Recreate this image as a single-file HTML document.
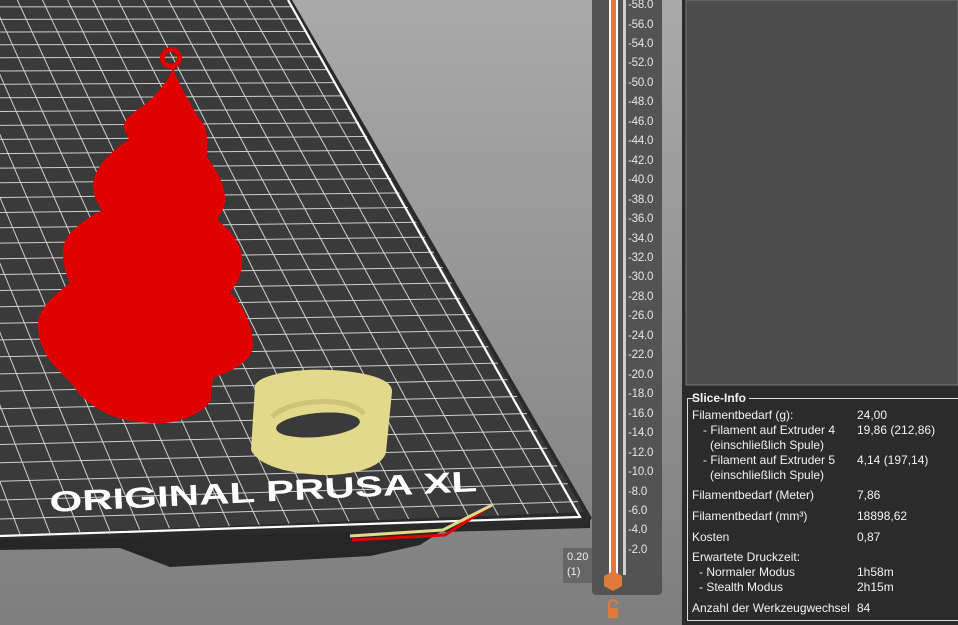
<!DOCTYPE html>
<html><head><meta charset="utf-8"><style>
html,body{margin:0;padding:0;width:958px;height:625px;overflow:hidden;background:#8f8f8f;font-family:"Liberation Sans",sans-serif}
.abs{position:absolute}
.lbl{position:absolute;left:628px;font-size:11.5px;color:#e6e6e6;letter-spacing:-0.2px}
.si{position:absolute;font-size:12px;color:#f2f2f2;white-space:nowrap}
</style></head><body>
<svg class="abs" style="left:0;top:0" width="958" height="625">
<defs>
<linearGradient id="bg" x1="0" y1="0" x2="0" y2="1"><stop offset="0" stop-color="#a9a9a9"/><stop offset="1" stop-color="#7e7e7e"/></linearGradient>
<clipPath id="bed"><polygon points="0,0 288,0 584,512 0,535"/></clipPath>
</defs>
<rect width="958" height="625" fill="url(#bg)"/>
<polygon points="0,530 590,517 590,528 440,532 420,545 370,556 170,567 120,548 0,550" fill="#262626"/>
<polygon points="0,0 292,0 592,518 584,528 0,540" fill="#2a2a2a"/>
<polygon points="0,0 288,0 584,512 0,535" fill="#3a3a3b"/>
<g clip-path="url(#bed)" stroke="#cfcfcf" stroke-width="1" id="grid"></g>
<polyline points="0,536 580,517 288,0" fill="none" stroke="#fff" stroke-width="2.2"/>
<path d="M173,68 C166,85 152,100 140,108 C128,116 122,124 124,128 C126,134 130,138 128,140 C110,152 94,168 93,185 C93,198 100,206 102,210 C85,220 64,232 63,250 C62,266 68,278 70,283 C52,296 38,310 38,325 C38,342 46,356 52,363 C60,372 68,380 73,385 C80,398 95,408 112,416 C130,422 150,424 165,423 C190,420 205,410 211,400 L213,378 C235,370 253,360 253,345 C253,325 243,305 230,292 C240,282 243,268 242,257 C240,240 228,228 217,220 C222,212 226,205 225,197 C224,180 214,168 207,157 C208,145 207,135 205,127 C203,122 198,118 197,115 C188,100 178,82 173,68 Z" fill="#e00000"/>
<circle cx="171" cy="58" r="8.5" fill="none" stroke="#e00000" stroke-width="5"/>
<path d="M255,386 C258,374 300,368 330,370 C370,372 393,380 392,392 L386,452 C383,468 350,476 320,475 C285,473 258,465 251,450 Z" fill="#e3d98a"/>
<ellipse cx="318" cy="425" rx="42" ry="12" fill="#3a3a3b" transform="rotate(-5 318 425)"/>
<path d="M272,417 C290,398 350,396 364,414" fill="none" stroke="#cfc378" stroke-width="5"/>
<polyline points="352,540 445,535 490,506" fill="none" stroke="#e00000" stroke-width="3"/>
<polyline points="350,536 443,530 492,505" fill="none" stroke="#e3d98a" stroke-width="3"/>
<text x="50" y="512" font-family="Liberation Sans" font-weight="bold" font-size="29" fill="#fff" transform="rotate(-2.8 50 512)" textLength="428" lengthAdjust="spacingAndGlyphs">ORIGINAL PRUSA XL</text>
<rect x="592" y="-5" width="70" height="600" rx="4" fill="#535353"/>
<rect x="609" y="0" width="9" height="580" fill="#fff"/>
<rect x="611" y="0" width="5" height="580" fill="#e07a3c"/>
<rect x="623" y="0" width="3" height="575" fill="#cfcfcf"/>
<polygon points="613,571 622,576 622,586 613,591 604,586 604,576" fill="#e07a3c"/>
<rect x="563" y="548" width="29" height="35" fill="#666"/>
<rect x="608" y="608" width="10" height="10" fill="#e07a3c"/>
<path d="M609,608 v-4 a4,4 0 0 1 8,0" fill="none" stroke="#e07a3c" stroke-width="2"/>
<rect x="682" y="0" width="276" height="625" fill="#2b2b2b"/>
<rect x="686" y="0" width="272" height="385" fill="#4c4c4c" stroke="#777" stroke-width="1"/>
<rect x="687.5" y="398.5" width="275" height="222" fill="none" stroke="#ddd" stroke-width="1"/>
<rect x="694" y="392" width="55" height="12" fill="#2b2b2b"/>
</svg>
<div class="si" style="left:692px;top:391px;font-weight:bold;font-size:12px">Slice-Info</div>
<div class="si" style="left:692px;top:408px">Filamentbedarf (g):</div><div class="si" style="left:857px;top:408px">24,00</div>
<div class="si" style="left:703px;top:423px">- Filament auf Extruder 4</div><div class="si" style="left:857px;top:423px">19,86 (212,86)</div>
<div class="si" style="left:710px;top:438px">(einschließlich Spule)</div>
<div class="si" style="left:703px;top:453px">- Filament auf Extruder 5</div><div class="si" style="left:857px;top:453px">4,14 (197,14)</div>
<div class="si" style="left:710px;top:468px">(einschließlich Spule)</div>
<div class="si" style="left:692px;top:488px">Filamentbedarf (Meter)</div><div class="si" style="left:857px;top:488px">7,86</div>
<div class="si" style="left:692px;top:509px">Filamentbedarf (mm³)</div><div class="si" style="left:857px;top:509px">18898,62</div>
<div class="si" style="left:692px;top:530px">Kosten</div><div class="si" style="left:857px;top:530px">0,87</div>
<div class="si" style="left:692px;top:550px">Erwartete Druckzeit:</div>
<div class="si" style="left:699px;top:565px">- Normaler Modus</div><div class="si" style="left:857px;top:565px">1h58m</div>
<div class="si" style="left:699px;top:580px">- Stealth Modus</div><div class="si" style="left:857px;top:580px">2h15m</div>
<div class="si" style="left:692px;top:601px">Anzahl der Werkzeugwechsel</div><div class="si" style="left:857px;top:601px">84</div>
<div class="abs" style="left:567px;top:550px;font-size:11px;color:#eee;line-height:15px">0.20<br>(1)</div>
<div id="labels"></div>
<script>
var L=document.getElementById('labels'),h='';
for(var i=0;i<29;i++){var v=58-2*i;var y=-1+i*19.46;h+='<div class="lbl" style="top:'+y.toFixed(1)+'px">-'+v.toFixed(1)+'</div>';}
L.innerHTML=h;
var g=document.getElementById('grid'),s='';
var vx=-1135,vy=-2500;
for(var x=-10;x<620;x+=30){
 var fy=535-x*0.033;
 s+='<line x1="'+x+'" y1="'+fy+'" x2="'+(x+(vx-x)*0.3)+'" y2="'+(fy+(vy-fy)*0.3)+'"/>';}
var y=519;
while(y>0){s+='<line x1="0" y1="'+y+'" x2="600" y2="'+(y-600*0.03*(y/520))+'"/>';y-=19-(520-y)*0.013;}
g.innerHTML=s;
</script>
</body></html>
